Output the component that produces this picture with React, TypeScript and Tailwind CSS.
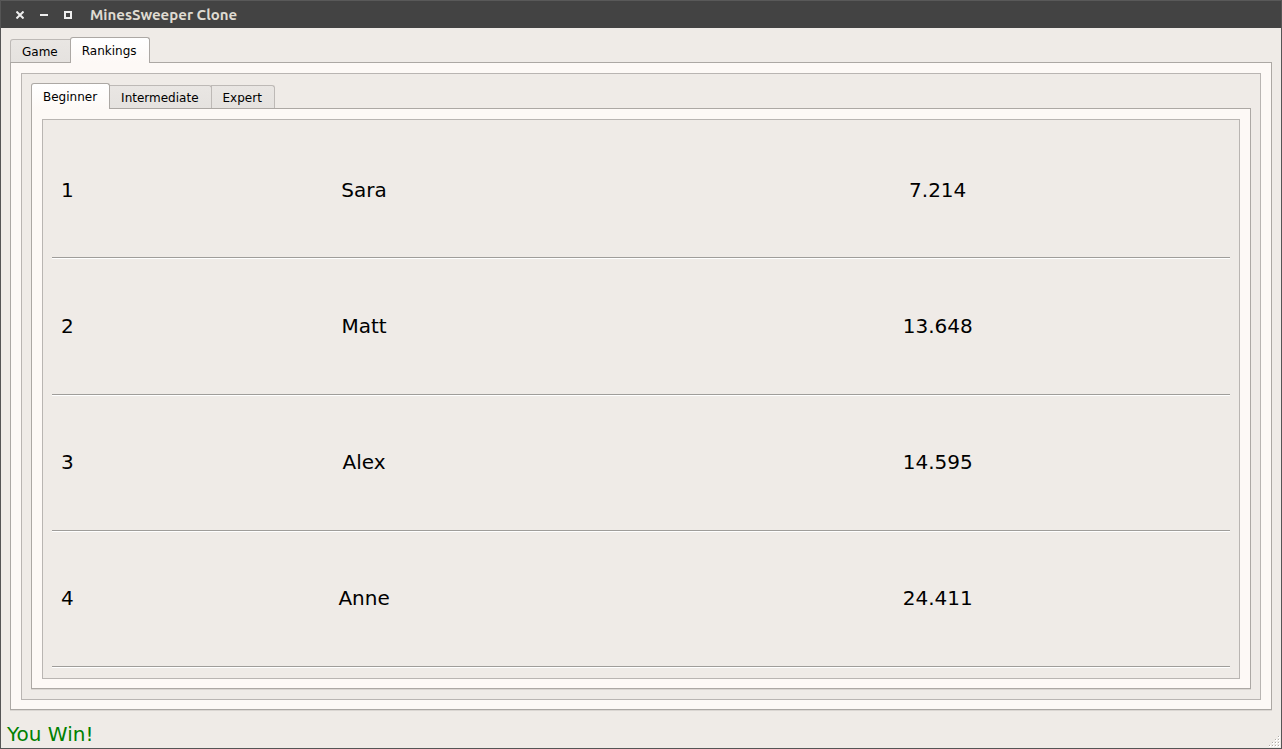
import { useState } from "react";
import type { ReactNode } from "react";

type Score = { name: string; time: string };

const beginnerScores: Score[] = [
  { name: "Sara", time: "7.214" },
  { name: "Matt", time: "13.648" },
  { name: "Alex", time: "14.595" },
  { name: "Anne", time: "24.411" },
];

const gripDots = [
  [9, 0],
  [6, 3], [9, 3],
  [3, 6], [6, 6], [9, 6],
  [0, 9], [3, 9], [6, 9], [9, 9],
];

function TitleBar() {
  return (
    <header className="flex h-7 items-center border-t border-[#595959] bg-[#434343] pl-[13px]">
      <button type="button" aria-label="Close" className="flex size-3 items-center justify-center">
        <svg width="8" height="8" viewBox="0 0 8 8" stroke="#eeeeee" strokeWidth="2">
          <path d="M0.5 0.5L7.5 7.5M7.5 0.5L0.5 7.5" />
        </svg>
      </button>
      <button type="button" aria-label="Minimize" className="ml-3 flex size-3 items-center justify-center">
        <svg width="8" height="8" viewBox="0 0 8 8" fill="#eeeeee">
          <path d="M0 3h8v2H0z" />
        </svg>
      </button>
      <button type="button" aria-label="Maximize" className="ml-3 flex size-3 items-center justify-center">
        <svg width="8" height="8" viewBox="0 0 8 8" fill="none" stroke="#eeeeee" strokeWidth="2">
          <path d="M1 1h6v6H1z" />
        </svg>
      </button>
      <h1 className="ml-4 font-['Ubuntu','Noto_Sans',sans-serif] text-[15px] leading-5 font-bold text-[#dfdbd2]">
        MinesSweeper Clone
      </h1>
    </header>
  );
}

function Tabs({
  names,
  selected,
  onSelect,
  children,
}: {
  names: string[];
  selected: string;
  onSelect: (name: string) => void;
  children: ReactNode;
}) {
  return (
    <section className="flex flex-1 flex-col">
      <div role="tablist" className="flex items-end">
        {names.map((name, i) => {
          const active = name === selected;
          const first = i === 0;
          return (
            <button
              key={name}
              type="button"
              role="tab"
              aria-selected={active}
              onClick={() => onSelect(name)}
              className={
                active
                  ? "relative z-10 -mr-px -mb-px h-[26px] rounded-t-[3px] border border-b-0 border-[#aca8a4] bg-linear-to-b from-white to-[#fdf9f6] pr-3 pl-[11px] text-xs"
                  : first
                    ? "-mr-px h-[23px] rounded-tl-[3px] border border-b-0 border-[#bdb9b6] bg-linear-to-b from-[#e9e6e3] to-[#e5e2df] pr-3 pl-[11px] pt-[2px] text-xs"
                    : "-mr-px h-[23px] rounded-tr-[3px] border border-b-0 border-[#bdb9b6] bg-linear-to-b from-[#e9e6e3] to-[#e5e2df] pr-3 pl-[11px] pt-[2px] text-xs"
              }
            >
              {name}
            </button>
          );
        })}
      </div>
      <div
        role="tabpanel"
        className="flex flex-1 flex-col border border-[#aca8a4] bg-[#fdf9f6] px-[10px] pt-[10px] pb-[9px] shadow-[0_1px_0_#dad6d2]"
      >
        {children}
      </div>
    </section>
  );
}

function Scores({ scores }: { scores: Score[] }) {
  return (
    <table className="flex flex-1 flex-col text-xl">
      <tbody className="flex flex-1 flex-col">
        {scores.map((score, i) => (
          <tr
            key={score.name}
            className="grid flex-1 grid-cols-[auto_1fr_1fr] items-center gap-x-[7px] border-b border-[#9f9d9a] px-[9px] text-center shadow-[0_1px_0_#ffffff]"
          >
            <td>{i + 1}</td>
            <td>{score.name}</td>
            <td>{score.time}</td>
          </tr>
        ))}
      </tbody>
    </table>
  );
}

export default function App() {
  const [page, setPage] = useState("Rankings");
  const [level, setLevel] = useState("Beginner");

  return (
    <div className="flex min-h-screen flex-col border-x border-b border-[#555555] bg-[#efebe7] font-['DejaVu_Sans',sans-serif] text-black">
      <TitleBar />
      <main className="flex flex-1 flex-col px-[9px] pt-[9px]">
        <Tabs names={["Game", "Rankings"]} selected={page} onSelect={setPage}>
          {page === "Rankings" && (
            <div className="flex flex-1 flex-col border border-[#b9b5b2] bg-[#efebe7] px-[9px] pt-[9px] pb-[10px]">
              <Tabs names={["Beginner", "Intermediate", "Expert"]} selected={level} onSelect={setLevel}>
                <div className="flex flex-1 flex-col border border-[#b9b5b2] bg-[#efebe7] px-[9px] pt-[2px] pb-[11px]">
                  <Scores scores={level === "Beginner" ? beginnerScores : []} />
                </div>
              </Tabs>
            </div>
          )}
        </Tabs>
      </main>
      <footer className="flex items-end justify-between pt-[10px] pl-[6px]">
        <output className="text-xl leading-7 text-[#008000]">You Win!</output>
        <svg width="12" height="12" viewBox="0 0 12 12" aria-hidden="true">
          {gripDots.map(([x, y]) => (
            <g key={`${x}-${y}`}>
              <rect x={x} y={y} width="2" height="2" fill="#ffffff" />
              <rect x={x} y={y} width="1" height="1" fill="#b0aca8" />
            </g>
          ))}
        </svg>
      </footer>
    </div>
  );
}
